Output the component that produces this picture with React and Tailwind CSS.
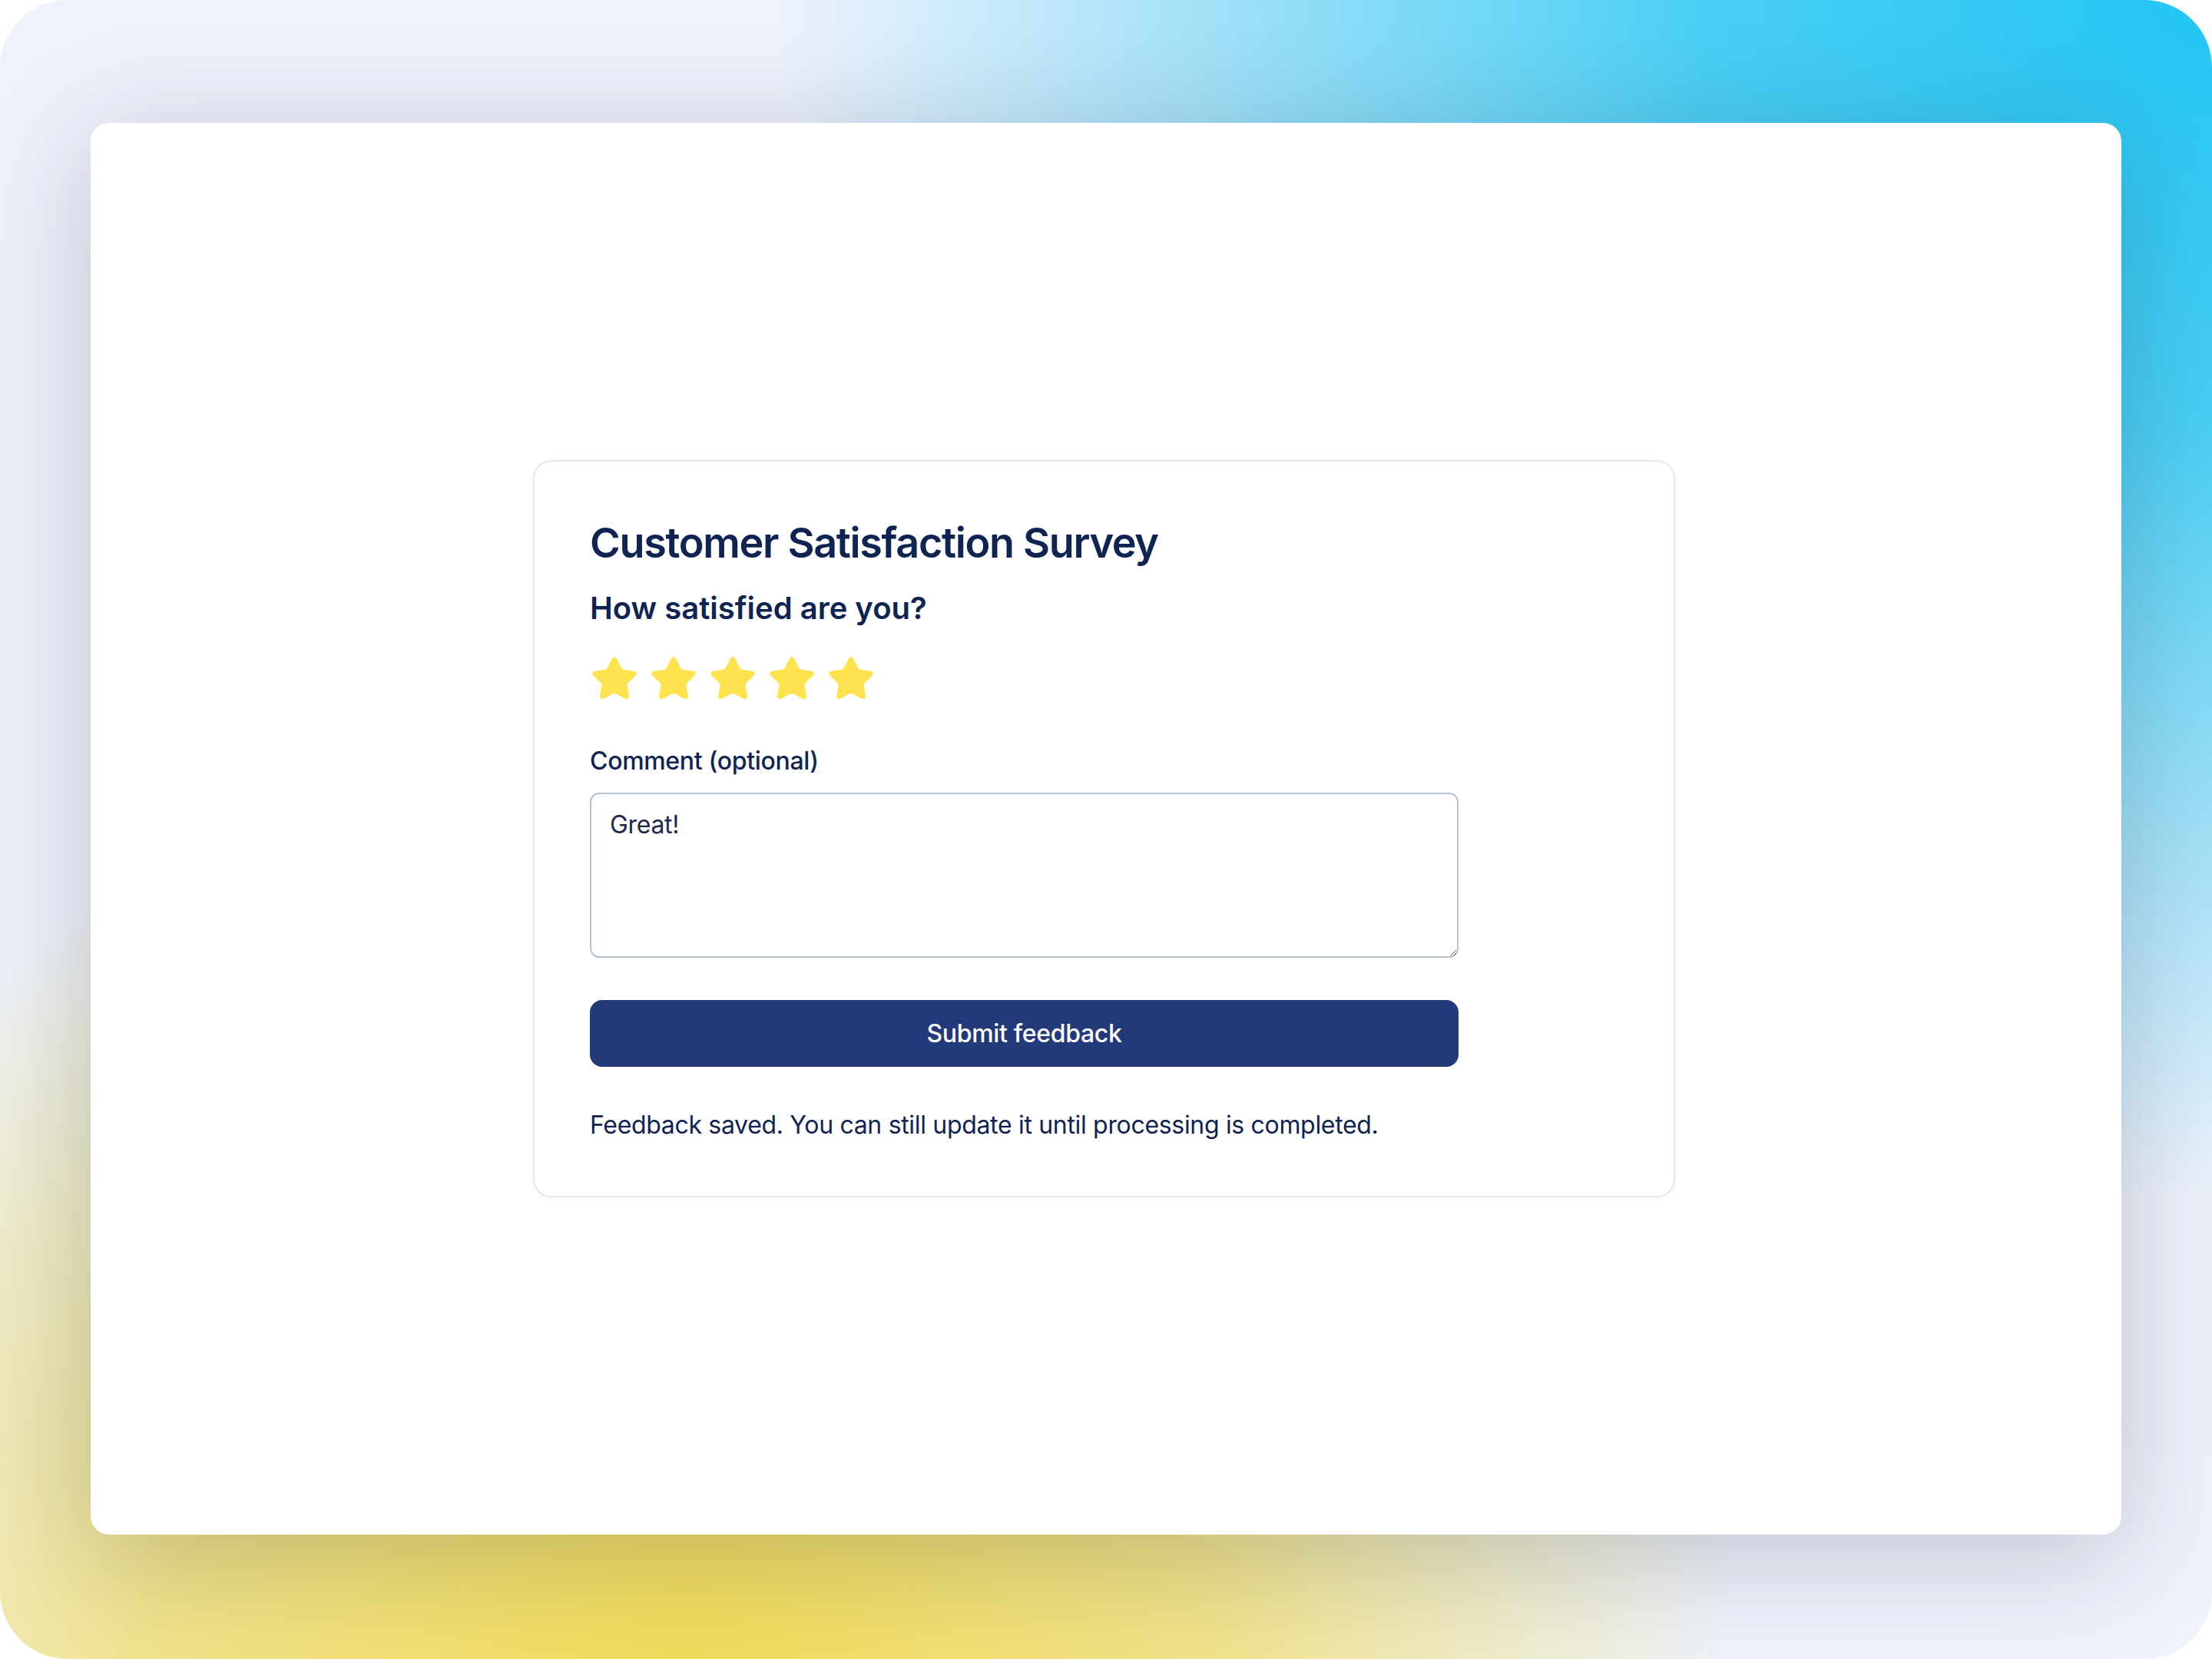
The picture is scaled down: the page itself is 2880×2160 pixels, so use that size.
import React from 'react';
import { Star } from 'lucide-react';

const stars = [1, 2, 3, 4, 5];

const App = () => {
  return (
    <div className="w-[2880px] h-[2160px] bg-white font-['Inter','Noto_Sans',sans-serif]">
      <div className="h-full rounded-[88px] px-[118px] pt-[160px] pb-[162px] bg-[radial-gradient(ellipse_2400px_2000px_at_100%_0%,#22c6f4_0%,rgba(34,198,244,0.8)_28%,rgba(34,198,244,0)_78%),radial-gradient(ellipse_1700px_1500px_at_31%_100%,#f0dc5a_0%,rgba(240,220,90,0.7)_40%,rgba(240,220,90,0)_80%),linear-gradient(#eef2fb,#eef2fb)]">
        <div className="h-full rounded-[24px] bg-white shadow-[0_24px_150px_rgba(15,23,42,0.22)] flex items-center justify-center">
          <div className="mr-[5px] w-[1487px] rounded-[24px] border-2 border-[#e6e8ee] bg-white px-[72px] pt-[74px] pb-[68px] shadow-[0_2px_6px_rgba(15,23,42,0.04)]">
            <h1 className="text-[54px] leading-[64px] font-semibold tracking-[-0.025em] text-[#0f2452]">
              Customer Satisfaction Survey
            </h1>
            <h2 className="mt-[25px] text-[40px] leading-[56px] font-semibold text-[#0f2452]">
              How satisfied are you?
            </h2>
            <div className="mt-8 flex gap-[13px]">
              {stars.map((n) => (
                <Star key={n} size={64} strokeWidth={1.5} className="fill-[#fee34f] text-[#fee34f]" />
              ))}
            </div>
            <label className="mt-[51px] block text-[32px] leading-[48px] font-medium tracking-[-0.01em] text-[#0f2452]">
              Comment (optional)
            </label>
            <textarea
              defaultValue="Great!"
              className="mt-[17px] block w-[1131px] h-[215px] rounded-[12px] border-2 border-[#b9c1d1] bg-white px-[24px] py-[16px] text-[32px] leading-[48px] tracking-[-0.01em] text-[#1c2a48] outline-none"
            />
            <button
              type="button"
              className="mt-[55px] block w-[1131px] h-[87px] rounded-[16px] bg-[#233a7a] text-[32px] font-medium tracking-[-0.01em] text-white"
            >
              Submit feedback
            </button>
            <p className="mt-[52px] text-[32px] leading-[48px] tracking-[-0.01em] text-[#0f2452]">
              Feedback saved. You can still update it until processing is completed.
            </p>
          </div>
        </div>
      </div>
    </div>
  );
};

export default App;
